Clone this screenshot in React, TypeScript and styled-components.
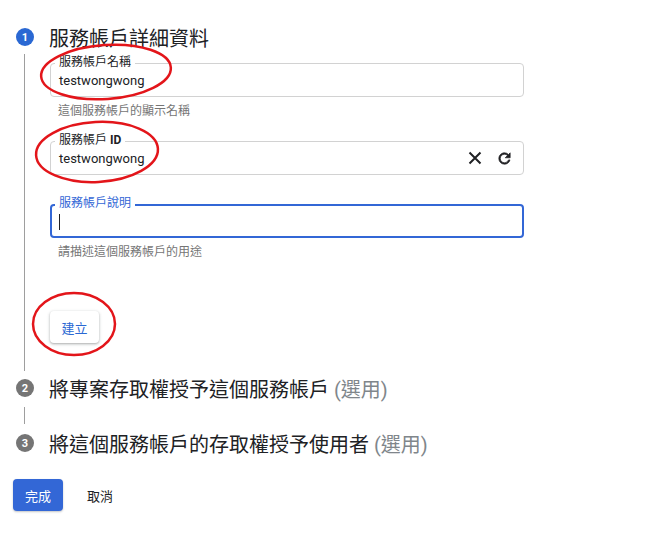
import React from "react";
import styled, { createGlobalStyle } from "styled-components";

const Global = createGlobalStyle`
  html, body { margin: 0; padding: 0; background: #fff; }
  body { font-family: Roboto, "Noto Sans CJK TC", "Noto Sans", sans-serif; color: #202124; }
`;

const Page = styled.div`
  position: relative;
  width: 648px;
  height: 553px;
  overflow: hidden;
  padding: 26px 0 0 16px;
  box-sizing: border-box;
`;

const StepHeader = styled.div`
  display: flex;
  align-items: center;
  gap: 15px;
  height: 22px;
`;

const StepNum = styled.div<{ $active?: boolean }>`
  width: 18px;
  height: 18px;
  border-radius: 50%;
  background: ${(p) => (p.$active ? "#2a68d3" : "#757575")};
  color: #fff;
  font-size: 11px;
  font-weight: 700;
  display: flex;
  align-items: center;
  justify-content: center;
  flex: none;
`;

const StepTitle = styled.div`
  font-size: 20px;
  color: #202124;
  white-space: nowrap;
`;

const Optional = styled.span`
  color: #80868b;
`;

const StepBody = styled.div<{ $h: number; $pt: number }>`
  margin-left: 8px;
  border-left: 1px solid #9e9e9e;
  height: ${(p) => p.$h}px;
  padding: ${(p) => p.$pt}px 0 0 25px;
  box-sizing: border-box;
  margin-top: 6px;
  margin-bottom: 6px;
`;

const FieldBlock = styled.div<{ $mb: number }>`
  width: 474px;
  margin-bottom: ${(p) => p.$mb}px;
`;

const Outline = styled.div<{ $focus?: boolean }>`
  position: relative;
  height: 34px;
  box-sizing: border-box;
  border: ${(p) => (p.$focus ? "2px solid #3367d6" : "1px solid #d2d2d2")};
  border-radius: 4px;
  display: flex;
  align-items: center;
  padding: 0 ${(p) => (p.$focus ? 7 : 8)}px;
`;

const Label = styled.span<{ $focus?: boolean }>`
  position: absolute;
  top: ${(p) => (p.$focus ? -10 : -9)}px;
  left: ${(p) => (p.$focus ? 3 : 4)}px;
  padding: 0 4px;
  background: #fff;
  font-size: 12px;
  line-height: 15px;
  color: ${(p) => (p.$focus ? "#3367d6" : "#202124")};
  b { font-weight: 700; }
`;

const Value = styled.span`
  font-size: 13px;
  color: #202124;
  flex: 1;
  padding-top: 1px;
`;

const Caret = styled.span`
  width: 1px;
  height: 16px;
  background: #202124;
  margin-top: 2px;
`;

const Hint = styled.div`
  font-size: 12px;
  color: #757575;
  padding: 4px 0 0 8px;
  height: 16px;
`;

const Icons = styled.div`
  display: flex;
  gap: 14px;
  align-items: center;
  margin-right: 2px;
`;

const CreateBtn = styled.button`
  width: 49px;
  height: 32px;
  border: none;
  border-radius: 4px;
  background: #fff;
  color: #2a68d3;
  font-family: inherit;
  font-size: 13px;
  box-shadow: 0 1px 2px rgba(60,64,67,0.3), 0 1px 3px 1px rgba(60,64,67,0.12);
  padding: 0;
`;

const ShortLine = styled.div`
  margin: 8px 0 8px 8px;
  width: 1px;
  height: 17px;
  background: #9e9e9e;
`;

const Actions = styled.div`
  display: flex;
  align-items: center;
  gap: 24px;
  margin: 25px 0 0 -3px;
`;

const DoneBtn = styled.button`
  width: 50px;
  height: 32px;
  border: none;
  border-radius: 4px;
  background: #3367d6;
  color: #fff;
  font-family: inherit;
  font-size: 13px;
  padding: 0;
  box-shadow: 0 1px 2px rgba(60,64,67,0.3);
`;

const CancelBtn = styled.button`
  border: none;
  background: none;
  font-family: inherit;
  font-size: 13px;
  color: #202124;
  padding: 0;
`;

const Marks = styled.svg`
  position: absolute;
  left: 0;
  top: 0;
  pointer-events: none;
`;

export default function App() {
  return (
    <>
      <Global />
      <Page>
        <StepHeader>
          <StepNum $active>1</StepNum>
          <StepTitle>服務帳戶詳細資料</StepTitle>
        </StepHeader>
        <StepBody $h={317} $pt={9}>
          <FieldBlock $mb={24}>
            <Outline>
              <Label>服務帳戶名稱</Label>
              <Value>testwongwong</Value>
            </Outline>
            <Hint>這個服務帳戶的顯示名稱</Hint>
          </FieldBlock>
          <FieldBlock $mb={29}>
            <Outline>
              <Label>服務帳戶 <b>ID</b></Label>
              <Value>testwongwong</Value>
              <Icons>
                <svg width="14" height="14" viewBox="0 0 14 14">
                  <path d="M1.5 1.5 L12.5 12.5 M12.5 1.5 L1.5 12.5" stroke="#202124" strokeWidth="2" />
                </svg>
                <svg width="17" height="17" viewBox="0 0 24 24">
                  <path
                    d="M17.65 6.35A7.958 7.958 0 0 0 12 4c-4.42 0-7.99 3.58-7.99 8s3.57 8 7.99 8c3.73 0 6.84-2.55 7.73-6h-2.08A5.99 5.99 0 0 1 12 18c-3.31 0-6-2.69-6-6s2.69-6 6-6c1.66 0 3.14.69 4.22 1.78L13 11h7V4l-2.35 2.35z"
                    fill="#202124"
                    stroke="#202124"
                    strokeWidth="1"
                  />
                </svg>
              </Icons>
            </Outline>
          </FieldBlock>
          <FieldBlock $mb={53}>
            <Outline $focus>
              <Label $focus>服務帳戶說明</Label>
              <Caret />
            </Outline>
            <Hint>請描述這個服務帳戶的用途</Hint>
          </FieldBlock>
          <CreateBtn>建立</CreateBtn>
        </StepBody>
        <StepHeader>
          <StepNum>2</StepNum>
          <StepTitle>
            將專案存取權授予這個服務帳戶 <Optional>(選用)</Optional>
          </StepTitle>
        </StepHeader>
        <ShortLine />
        <StepHeader>
          <StepNum>3</StepNum>
          <StepTitle>
            將這個服務帳戶的存取權授予使用者 <Optional>(選用)</Optional>
          </StepTitle>
        </StepHeader>
        <Actions>
          <DoneBtn>完成</DoneBtn>
          <CancelBtn>取消</CancelBtn>
        </Actions>
        <Marks width="648" height="553" viewBox="0 0 648 553">
          <g fill="none" stroke="#e3151a" strokeWidth="2.5">
            <ellipse cx="106" cy="72" rx="65" ry="27" transform="rotate(-4 106 72)" />
            <ellipse cx="97" cy="152" rx="61" ry="30" transform="rotate(-3 97 152)" />
            <ellipse cx="74" cy="324" rx="41" ry="31" />
          </g>
        </Marks>
      </Page>
    </>
  );
}
